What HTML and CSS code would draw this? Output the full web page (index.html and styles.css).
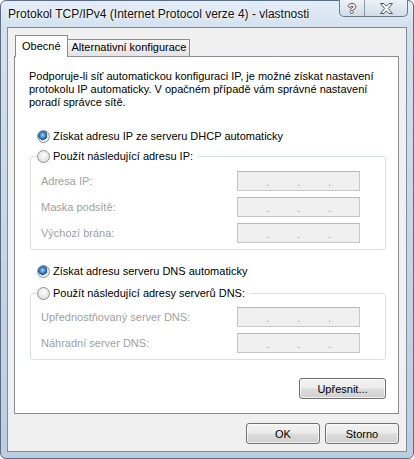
FILE: index.html
```html
<!DOCTYPE html>
<html>
<head lang="cs">
    <meta charset="UTF-8">
    <title>Protokol TCP/IPv4 - vlastnosti</title>
    <link rel="stylesheet" href="styles.css">
</head>
<body>
    <div class="window">
        <div class="titlebar">
            <span class="caption">Protokol TCP/IPv4 (Internet Protocol verze 4) - vlastnosti</span>
            <div class="caption-btns">
                <span class="cb help">?</span>
                <span class="cb close">
                    <svg width="15" height="11" viewBox="0 0 15 11">
                        <path d="M1.5 0.5 H5 L7.5 3.2 L10 0.5 H13.5 L9.3 5.5 L13.5 10.5 H10 L7.5 7.8 L5 10.5 H1.5 L5.7 5.5 Z" fill="#fff" stroke="#4b5663" stroke-width="1"/>
                    </svg>
                </span>
            </div>
        </div>
        <div class="client">
            <div class="tabs">
                <span class="tab active">Obecné</span>
                <span class="tab">Alternativní konfigurace</span>
            </div>
            <div class="panel">
                <p class="desc">Podporuje-li síť automatickou konfiguraci IP, je možné získat nastavení<br>protokolu IP automaticky. V opačném případě vám správné nastavení<br>poradí správce sítě.</p>

                <!--IP adresa-->
                <label class="radio first"><span class="dot on"></span>Získat adresu IP ze serveru DHCP automaticky</label>
                <fieldset class="group">
                    <legend><label class="radio"><span class="dot"></span>Použít následující adresu IP:</label></legend>
                    <div class="row"><span class="lbl">Adresa IP:</span><span class="ip"><i>.</i><i>.</i><i>.</i></span></div>
                    <div class="row"><span class="lbl">Maska podsítě:</span><span class="ip"><i>.</i><i>.</i><i>.</i></span></div>
                    <div class="row"><span class="lbl">Výchozí brána:</span><span class="ip"><i>.</i><i>.</i><i>.</i></span></div>
                </fieldset>

                <!--DNS-->
                <label class="radio dns"><span class="dot on"></span>Získat adresu serveru DNS automaticky</label>
                <fieldset class="group group-dns">
                    <legend><label class="radio"><span class="dot"></span>Použít následující adresy serverů DNS:</label></legend>
                    <div class="row"><span class="lbl">Upřednostňovaný server DNS:</span><span class="ip"><i>.</i><i>.</i><i>.</i></span></div>
                    <div class="row"><span class="lbl">Náhradní server DNS:</span><span class="ip"><i>.</i><i>.</i><i>.</i></span></div>
                </fieldset>

                <div class="adv"><button class="btn btn-adv">Upřesnit...</button></div>
            </div>
            <div class="actions">
                <button class="btn">OK</button>
                <button class="btn">Storno</button>
            </div>
        </div>
    </div>
</body>
</html>
```

FILE: styles.css
```css
body, p, fieldset, legend {
    margin: 0;
    padding: 0;
}

body {
    font-family: "Liberation Sans", Arial, sans-serif;
    font-size: 11px;
    color: #000;
    background: #fff;
}

.window {
    width: 414px;
    height: 459px;
    box-sizing: border-box;
    display: flex;
    flex-direction: column;
    border: 1px solid #5b6d80;
    border-radius: 6px;
    background: linear-gradient(180deg, #e4edf7 0, #d3e0ee 26px, #c5d5e6 60%, #bccde0 100%);
}

/* titulek okna */
.titlebar {
    height: 26px;
    display: flex;
    justify-content: space-between;
    padding: 0 5px 0 7px;
}

.caption {
    font-size: 12px;
    line-height: 26px;
    color: #111;
    text-shadow: 0 0 6px #fff, 0 0 3px #fff;
}

.caption-btns {
    display: flex;
    align-self: flex-start;
    height: 17px;
    margin-top: -1px;
    box-sizing: border-box;
    border: 1px solid #6c7885;
    border-top: 0;
    border-radius: 0 0 5px 5px;
    background: linear-gradient(180deg, #edf2f8 0, #dfe7f0 50%, #d2dce8 100%);
    overflow: hidden;
}

.cb {
    display: flex;
    align-items: center;
    justify-content: center;
}

.help {
    width: 24px;
    border-right: 1px solid #8a96a3;
    font-weight: bold;
    font-size: 13px;
    color: #fff;
    text-shadow: 1px 0 0 #4b5663, -1px 0 0 #4b5663, 0 1px 0 #4b5663, 0 -1px 0 #4b5663;
}

.close {
    width: 42px;
}

/* klientská oblast */
.client {
    flex: 1;
    margin: 0 6px 6px;
    border: 1px solid #7d8c9b;
    background: #f0f0f0;
    padding: 7px 7px 0 6px;
}

.tabs {
    display: flex;
    align-items: flex-end;
    height: 22px;
    margin-bottom: -1px;
    padding-left: 1px;
}

.tab {
    height: 17px;
    line-height: 15px;
    box-sizing: border-box;
    margin-bottom: 1px;
    margin-left: -1px;
    padding: 0 3px 0 4px;
    border: 1px solid #898c95;
    border-bottom: 0;
    background: linear-gradient(180deg, #f6f6f6, #e3e3e3);
}

.tab.active {
    position: relative;
    z-index: 1;
    height: 22px;
    line-height: 21px;
    margin: 0;
    padding: 0 6px;
    background: #fff;
}

.panel {
    border: 1px solid #898c95;
    background: #fff;
    padding: 13px 12px 14px 14px;
}

.desc {
    line-height: 13px;
}

.radio {
    display: flex;
    align-items: center;
    height: 13px;
    line-height: 13px;
}

.radio.first {
    margin: 21px 0 0 8px;
}

.radio.dns {
    margin: 15px 0 0 8px;
}

.dot {
    width: 13px;
    height: 13px;
    box-sizing: border-box;
    margin-right: 3px;
    border: 1px solid #8f9295;
    border-radius: 50%;
    background: radial-gradient(circle at 50% 40%, #fdfdfd 0, #ececec 45%, #d2d2d2 100%);
}

.dot.on {
    background: radial-gradient(circle at 42% 38%, #a9d8fb 0, #3d8ad0 28%, #1b528f 48%, #e2e2e2 52%, #fafafa 100%);
}

.group {
    margin: 7px 0 0 1px;
    padding: 8px 10px 6px;
    border: 1px solid #d5dfe5;
    border-radius: 3px;
}

.group-dns {
    margin-top: 9px;
    padding-top: 7px;
}

.group legend {
    margin-left: -4px;
    padding-right: 5px;
}

.row {
    display: flex;
    align-items: center;
    height: 20px;
}

.row + .row {
    margin-top: 6px;
}

.lbl {
    width: 196px;
    color: #a0a0a0;
}

.ip {
    display: flex;
    justify-content: space-evenly;
    width: 123px;
    height: 20px;
    box-sizing: border-box;
    border: 1px solid #c6c6c6;
    border-top-color: #b9b9b9;
    background: #efefef;
}

.ip i {
    font-style: normal;
    line-height: 20px;
    color: #9a9a9a;
}

.adv {
    display: flex;
    justify-content: flex-end;
    margin-top: 18px;
}

/* tlačítka */
.btn {
    height: 21px;
    width: 74px;
    padding: 0;
    font-family: "Liberation Sans", Arial, sans-serif;
    font-size: 11px;
    color: #000;
    border: 1px solid #707070;
    border-radius: 3px;
    background: linear-gradient(180deg, #f2f2f2 0, #ebebeb 48%, #dddddd 52%, #cfcfcf 100%);
    box-shadow: inset 0 0 0 1px rgba(255, 255, 255, 0.7);
}

.btn-adv {
    width: 87px;
}

.actions {
    display: flex;
    justify-content: flex-end;
    gap: 5px;
    margin-top: 9px;
}
```
